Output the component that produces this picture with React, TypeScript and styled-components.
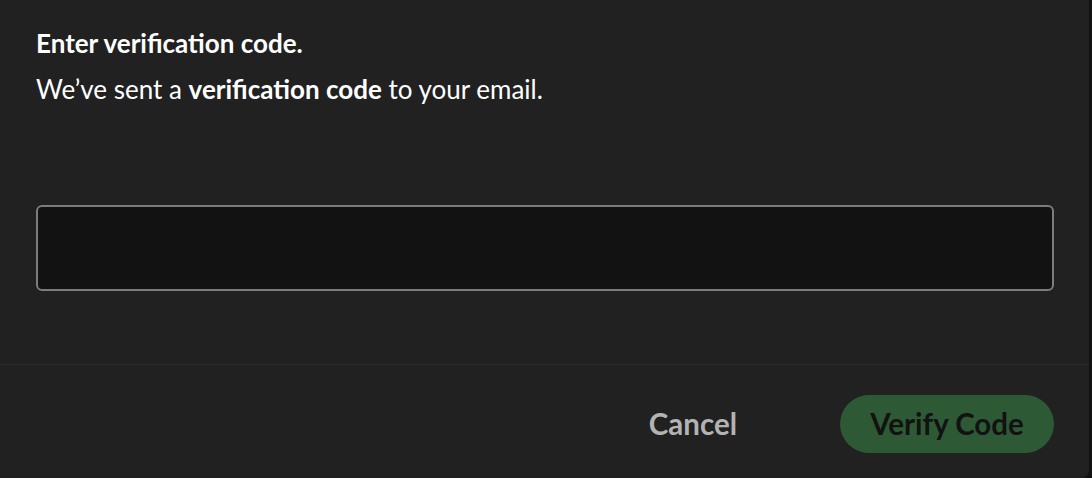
import React from 'react';
import styled, { createGlobalStyle } from 'styled-components';

const GlobalStyle = createGlobalStyle`
    html, body {
        margin: 0;
        padding: 0;
        background: #121212;
    }
    * {
        box-sizing: border-box;
    }
`;

const Dialog = styled.div({
    width: 1089,
    height: 478,
    background: '#212121',
    borderBottomRightRadius: 8,
    display: 'flex',
    flexDirection: 'column',
    fontFamily: 'Lato, "Liberation Sans", sans-serif',
    color: '#ffffff',
})

const Body = styled.div({
    padding: '26px 36px 0 36px',
    height: 365,
    borderBottom: '1px solid #2c2c2c',
})

const Title = styled.h2({
    margin: 0,
    fontSize: 26,
    fontWeight: 700,
    lineHeight: '34px',
})

const Message = styled.p({
    margin: '13px 0 0 0',
    fontSize: 26,
    lineHeight: '32px',
    fontWeight: 400,
    'b': {
        fontWeight: 700,
    },
})

const CodeInput = styled.input({
    display: 'block',
    marginTop: 100,
    width: 1018,
    height: 86,
    background: '#121212',
    border: '2px solid #7c7c7c',
    borderRadius: 6,
    outline: 'none',
    color: '#fff',
    fontSize: 22,
    padding: '0 16px',
})

const Footer = styled.div({
    flex: 1,
    display: 'flex',
    justifyContent: 'flex-end',
    alignItems: 'center',
    gap: 103,
    padding: '4px 35px 0 0',
})

const TextButton = styled.button({
    background: 'none',
    border: 'none',
    padding: 0,
    fontFamily: 'inherit',
    fontSize: 29.5,
    fontWeight: 700,
    color: '#b3b3b3',
    cursor: 'pointer',
})

const PillButton = styled.button<{ $disabled?: boolean }>(props => ({
    height: 58,
    width: 214,
    borderRadius: 29,
    border: 'none',
    background: props.$disabled ? '#2d5a35' : '#1ed760',
    color: '#121212',
    fontFamily: 'inherit',
    fontSize: 29.5,
    fontWeight: 700,
    cursor: 'pointer',
}))

export default function App() {
    return (<>
        <GlobalStyle />
        <Dialog>
            <Body>
                <Title>Enter verification code.</Title>
                <Message>We’ve sent a <b>verification code</b> to your email.</Message>
                <CodeInput aria-label="Verification code" />
            </Body>
            <Footer>
                <TextButton>Cancel</TextButton>
                <PillButton $disabled>Verify Code</PillButton>
            </Footer>
        </Dialog>
    </>);
}
